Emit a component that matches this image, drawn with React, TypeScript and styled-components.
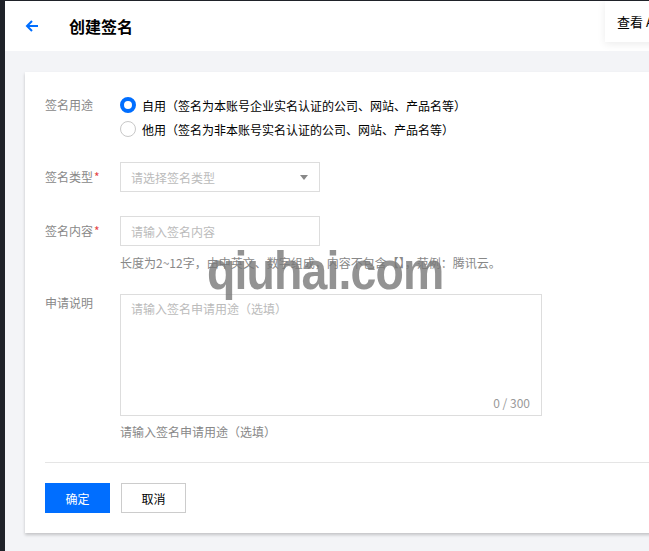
import React from "react";
import styled, { createGlobalStyle } from "styled-components";

const GlobalStyle = createGlobalStyle`
  html, body {
    margin: 0;
    padding: 0;
    overflow: hidden;
    background: #f3f4f7;
  }
  body {
    font-family: "Noto Sans CJK SC", "Noto Sans", "Liberation Sans", sans-serif;
    font-size: 12px;
    color: #000;
  }
  * { box-sizing: border-box; }
`;

const Shell = styled.div`
  display: flex;
  width: 100vw;
  height: 100vh;
  position: relative;
`;

const SideRail = styled.div`
  width: 5px;
  flex: none;
  background: #1f2229;
`;

const Main = styled.div`
  flex: 1;
  min-width: 0;
  display: flex;
  flex-direction: column;
  border-top: 1px solid #1f2229;
  background: #f3f4f7;
  overflow: hidden;
`;

const Header = styled.header`
  height: 50px;
  flex: none;
  background: #fff;
  display: flex;
  align-items: center;
  padding-left: 20px;
  position: relative;
`;

const BackButton = styled.button`
  border: 0;
  background: none;
  padding: 0;
  width: 14px;
  height: 14px;
  display: flex;
  color: #006eff;
  cursor: pointer;
  margin-right: 30px;
`;

const Title = styled.h1`
  margin: 0;
  font-size: 16px;
  font-weight: 700;
  line-height: 24px;
  color: #000;
`;

const DocLink = styled.div`
  position: absolute;
  top: 0;
  left: 600px;
  height: 41px;
  width: 140px;
  background: #fff;
  box-shadow: 0 2px 8px rgba(0, 0, 0, 0.08);
  padding-left: 12px;
  display: flex;
  align-items: center;
  font-size: 13px;
  color: #000;
  white-space: nowrap;
`;

const Content = styled.div`
  padding: 21px 0 0 20px;
`;

const Card = styled.section`
  width: 760px;
  background: #fff;
  box-shadow: 0 2px 3px rgba(0, 0, 0, 0.2);
  padding: 21px 20px 20px 20px;
  position: relative;
`;

const Row = styled.div<{ $top?: number }>`
  display: flex;
  align-items: flex-start;
  margin-top: ${(p) => p.$top ?? 0}px;
`;

const Label = styled.div<{ $lh: number }>`
  width: 75px;
  flex: none;
  color: #888;
  font-size: 12px;
  line-height: ${(p) => p.$lh}px;
`;

const Required = styled.span`
  color: #e54545;
  margin-left: 1px;
`;

const Control = styled.div`
  display: flex;
  flex-direction: column;
`;

const RadioItem = styled.label`
  display: flex;
  align-items: center;
  height: 24px;
  font-size: 12px;
  color: #000;
  cursor: pointer;
`;

const RadioDot = styled.span<{ $on?: boolean }>`
  width: 16px;
  height: 16px;
  border-radius: 50%;
  flex: none;
  margin-right: 6px;
  background: #fff;
  border: ${(p) => (p.$on ? "4px solid #006eff" : "1px solid #c8c8c8")};
`;

const SelectBox = styled.div`
  width: 200px;
  height: 30px;
  border: 1px solid #ddd;
  display: flex;
  align-items: center;
  justify-content: space-between;
  padding: 0 10px;
  color: #bbb;
  font-size: 12px;
`;

const Caret = styled.span`
  width: 0;
  height: 0;
  border-left: 4px solid transparent;
  border-right: 4px solid transparent;
  border-top: 5px solid #888;
  margin-right: 1px;
`;

const TextInput = styled.input`
  width: 200px;
  height: 30px;
  border: 1px solid #ddd;
  padding: 0 10px;
  font: inherit;
  font-size: 12px;
  outline: none;
  &::placeholder { color: #bbb; }
`;

const Help = styled.div<{ $top: number }>`
  margin-top: ${(p) => p.$top}px;
  line-height: 18px;
  font-size: 12px;
  color: #888;
`;

const AreaWrap = styled.div`
  width: 422px;
  height: 122px;
  border: 1px solid #ddd;
  position: relative;
`;

const TextArea = styled.textarea`
  width: 100%;
  height: 100%;
  border: 0;
  resize: none;
  padding: 5px 10px;
  font: inherit;
  font-size: 12px;
  line-height: 18px;
  outline: none;
  &::placeholder { color: #bbb; }
`;

const Counter = styled.span`
  position: absolute;
  right: 11px;
  bottom: 3px;
  color: #999;
  font-size: 12px;
  line-height: 18px;
`;

const Divider = styled.hr`
  border: 0;
  border-top: 1px solid #e5e5e5;
  margin: 21px 0 20px 0;
`;

const Actions = styled.div`
  display: flex;
  gap: 11px;
`;

const Button = styled.button<{ $primary?: boolean }>`
  width: 65px;
  height: 30px;
  font: inherit;
  font-size: 12px;
  cursor: pointer;
  background: ${(p) => (p.$primary ? "#006eff" : "#fff")};
  color: ${(p) => (p.$primary ? "#fff" : "#000")};
  border: 1px solid ${(p) => (p.$primary ? "#006eff" : "#ccc")};
`;

const Watermark = styled.div`
  position: absolute;
  left: 207px;
  top: 240px;
  font-family: "Liberation Sans", sans-serif;
  font-weight: 700;
  font-size: 54px;
  letter-spacing: -1px;
  line-height: 60px;
  color: rgba(120, 120, 120, 0.8);
  transform: scaleX(0.86);
  transform-origin: left top;
  pointer-events: none;
  white-space: nowrap;
`;

export default function App() {
  return (
    <>
      <GlobalStyle />
      <Shell>
        <SideRail />
        <Main>
          <Header>
            <BackButton aria-label="返回">
              <svg width="14" height="14" viewBox="0 0 14 14" fill="none">
                <path d="M13 7H2M7 2L2 7l5 5" stroke="currentColor" strokeWidth="2" />
              </svg>
            </BackButton>
            <Title>创建签名</Title>
            <DocLink>查看 API 文档</DocLink>
          </Header>
          <Content>
            <Card>
              <Row>
                <Label $lh={24}>签名用途</Label>
                <Control>
                  <RadioItem>
                    <RadioDot $on />
                    自用（签名为本账号企业实名认证的公司、网站、产品名等）
                  </RadioItem>
                  <RadioItem>
                    <RadioDot />
                    他用（签名为非本账号实名认证的公司、网站、产品名等）
                  </RadioItem>
                </Control>
              </Row>
              <Row $top={21}>
                <Label $lh={30}>
                  签名类型<Required>*</Required>
                </Label>
                <SelectBox>
                  请选择签名类型
                  <Caret />
                </SelectBox>
              </Row>
              <Row $top={24}>
                <Label $lh={30}>
                  签名内容<Required>*</Required>
                </Label>
                <Control>
                  <TextInput placeholder="请输入签名内容" />
                  <Help $top={8}>长度为2~12字，由中英文、数字组成，内容不包含【】，范例：腾讯云。</Help>
                </Control>
              </Row>
              <Row $top={22}>
                <Label $lh={18}>申请说明</Label>
                <Control>
                  <AreaWrap>
                    <TextArea placeholder="请输入签名申请用途（选填）" />
                    <Counter>0 / 300</Counter>
                  </AreaWrap>
                  <Help $top={7}>请输入签名申请用途（选填）</Help>
                </Control>
              </Row>
              <Divider />
              <Actions>
                <Button $primary>确定</Button>
                <Button>取消</Button>
              </Actions>
            </Card>
          </Content>
        </Main>
        <Watermark>qiuhai.com</Watermark>
      </Shell>
    </>
  );
}
